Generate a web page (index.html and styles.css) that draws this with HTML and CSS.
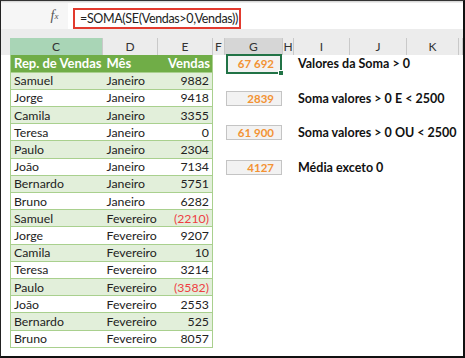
FILE: index.html
```html
<!DOCTYPE html>
<html lang="pt">
<head>
    <meta charset="UTF-8">
    <title>SOMA com SE</title>
    <link rel="stylesheet" href="styles.css">
</head>
<body>
    <div class="window">
        <div class="formula-bar">
            <div class="name-box"></div>
            <div class="fx"><i>f</i><sub>x</sub></div>
            <div class="formula-input">
                <span class="formula">=SOMA(SE(Vendas&gt;0,Vendas))</span>
            </div>
        </div>
        <div class="col-heads">
            <div></div>
            <div class="sel-col">C</div>
            <div>D</div>
            <div>E</div>
            <div>F</div>
            <div class="active-col">G</div>
            <div>H</div>
            <div>I</div>
            <div>J</div>
            <div>K</div>
            <div></div>
        </div>
        <div class="sheet">
            <table class="sales">
                <thead>
                    <tr>
                        <th>Rep. de Vendas</th>
                        <th>Mês</th>
                        <th class="num">Vendas</th>
                    </tr>
                </thead>
                <tbody id="salesBody"></tbody>
            </table>
            <div class="calcs">
                <div class="calc">
                    <div class="cell active">67 692<span class="handle"></span></div>
                    <div class="label">Valores da Soma &gt; 0</div>
                </div>
                <div class="calc">
                    <div class="cell">2839</div>
                    <div class="label">Soma valores &gt; 0 E &lt; 2500</div>
                </div>
                <div class="calc">
                    <div class="cell">61 900</div>
                    <div class="label">Soma valores &gt; 0 OU &lt; 2500</div>
                </div>
                <div class="calc">
                    <div class="cell">4127</div>
                    <div class="label">Média exceto 0</div>
                </div>
            </div>
        </div>
    </div>
    <script>
        const sales = [
            ['Samuel', 'Janeiro', 9882],
            ['Jorge', 'Janeiro', 9418],
            ['Camila', 'Janeiro', 3355],
            ['Teresa', 'Janeiro', 0],
            ['Paulo', 'Janeiro', 2304],
            ['João', 'Janeiro', 7134],
            ['Bernardo', 'Janeiro', 5751],
            ['Bruno', 'Janeiro', 6282],
            ['Samuel', 'Fevereiro', -2210],
            ['Jorge', 'Fevereiro', 9207],
            ['Camila', 'Fevereiro', 10],
            ['Teresa', 'Fevereiro', 3214],
            ['Paulo', 'Fevereiro', -3582],
            ['João', 'Fevereiro', 2553],
            ['Bernardo', 'Fevereiro', 525],
            ['Bruno', 'Fevereiro', 8057]
        ];

        const body = document.getElementById('salesBody');
        sales.forEach(row => {
            const tr = document.createElement('tr');
            const value = row[2] < 0
                ? `<td class="num neg">(${Math.abs(row[2])})</td>`
                : `<td class="num">${row[2]}</td>`;
            tr.innerHTML = `<td>${row[0]}</td><td>${row[1]}</td>${value}`;
            body.appendChild(tr);
        });
    </script>
</body>
</html>
```

FILE: styles.css
```css
body {
    margin: 0;
    font-family: 'Lato', 'Open Sans', sans-serif;
    background: #fff;
}
.window {
    width: 465px;
    height: 358px;
    box-sizing: border-box;
    border-top: 1px solid #333;
    border-left: 1px solid #222;
    border-right: 2px solid #111;
    border-bottom: 2px solid #111;
    overflow: hidden;
    background: #fff;
}
.formula-bar {
    height: 37px;
    box-sizing: border-box;
    background: #ececec;
    border-top: 1px solid #d8d8d8;
    padding-top: 1px;
    display: flex;
    align-items: flex-start;
}
.name-box {
    width: 40px;
    height: 26px;
    background: #f6f6f6;
}
.fx {
    width: 27px;
    height: 26px;
    background: #f6f6f6;
    font-family: 'Liberation Serif', serif;
    font-size: 14px;
    color: #555;
    display: flex;
    align-items: center;
    justify-content: center;
}
.fx sub {
    font-size: 9px;
    font-style: italic;
    vertical-align: -2px;
}
.formula-input {
    flex-grow: 1;
    height: 26px;
    background: #fff;
    padding: 5px 0 0 5px;
    box-sizing: border-box;
}
.formula {
    display: flex;
    align-items: center;
    width: 168px;
    height: 21px;
    box-sizing: border-box;
    border: 2px solid #e23a2e;
    padding-left: 5px;
    font-size: 12.5px;
    letter-spacing: -0.35px;
    color: #222;
    white-space: nowrap;
}
.col-heads {
    display: grid;
    grid-template-columns: 9px 93px 55px 55px 12px 58px 11px 56px 57px 52px 1fr;
    height: 17px;
    background: #ececec;
}
.col-heads div {
    border-right: 1px solid #c9c9c9;
    font-size: 12px;
    color: #333;
    display: flex;
    align-items: center;
    justify-content: center;
}
.col-heads div:first-child {
    border-right: none;
}
.col-heads .sel-col {
    background: #a9d5b6;
}
.col-heads .active-col {
    background: #d6d6d6;
}
.sheet {
    display: flex;
    align-items: flex-start;
}
.sales {
    margin-left: 9px;
    width: 203px;
    border-collapse: collapse;
    border-left: 1px solid #a9d08e;
    border-right: 1px solid #a9d08e;
    font-size: 12.3px;
    color: #222;
}
.sales th, .sales td {
    height: 17.2px;
    padding: 0 3px;
    box-sizing: border-box;
    text-align: left;
    white-space: nowrap;
    border-bottom: 1px solid #a9d08e;
}
.sales th {
    background: #70ad47;
    color: #fff;
    font-weight: bold;
    font-size: 13px;
    padding-right: 2px;
}
.sales th:first-child, .sales td:first-child {
    width: 93px;
}
.sales th:nth-child(2), .sales td:nth-child(2) {
    width: 55px;
}
.sales tbody tr:nth-child(odd) {
    background: #e2efda;
}
.sales .num {
    text-align: right;
}
.sales .neg {
    color: #ef3e42;
}
.calcs {
    margin-left: 13px;
    display: flex;
    flex-direction: column;
    gap: 17.3px;
}
.calc {
    height: 17.2px;
    display: flex;
    align-items: center;
}
.cell {
    position: relative;
    width: 56px;
    height: 15px;
    box-sizing: border-box;
    background: #f2f2f2;
    border: 1px solid #c4c4c4;
    color: #f39234;
    font-weight: bold;
    font-size: 11.5px;
    text-align: right;
    padding-right: 7px;
    line-height: 13px;
}
.cell.active {
    height: 20px;
    border: 2px solid #217346;
    line-height: 16px;
    padding-right: 6px;
}
.handle {
    position: absolute;
    right: -4px;
    bottom: -4px;
    width: 4px;
    height: 4px;
    background: #217346;
    border: 1px solid #fff;
}
.label {
    margin-left: 16px;
    font-size: 12.5px;
    font-weight: bold;
    color: #111;
    white-space: nowrap;
}
```
